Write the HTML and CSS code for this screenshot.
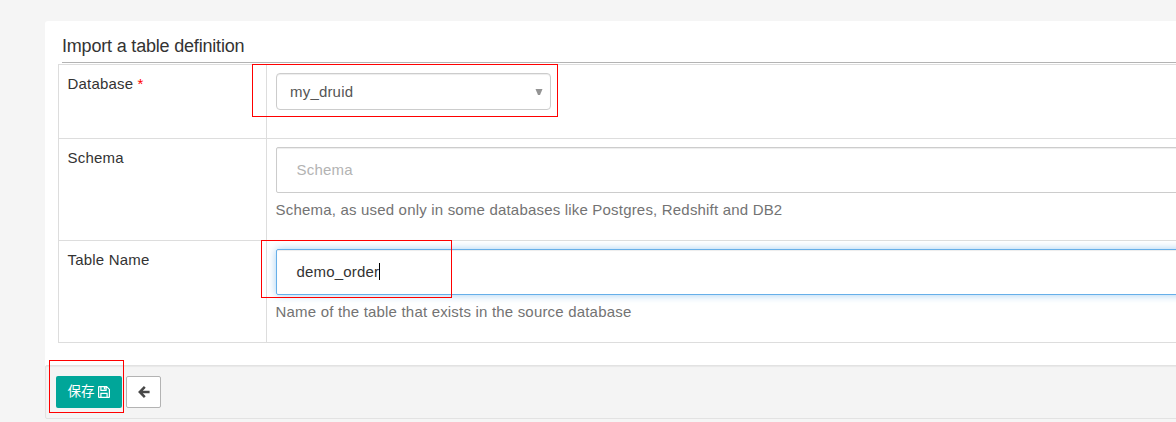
FILE: index.html
```html
<!DOCTYPE html>
<html lang="en">
<head>
<meta charset="utf-8">
<title>Import a table definition</title>
<link rel="stylesheet" href="styles.css">
</head>
<body>
<main class="panel">
  <h1 class="title">Import a table definition</h1>
  <div class="fields">
    <div class="row row-database">
      <div class="label">Database <span class="required">*</span></div>
      <div class="control">
        <div class="select"><span>my_druid</span><svg class="caret" width="8" height="6" viewBox="0 0 8 6"><path d="M.5 0h7L5 6H3z" fill="#949494"/></svg></div>
        <div class="mark mark-database"></div>
      </div>
    </div>
    <div class="row">
      <div class="label">Schema</div>
      <div class="control">
        <div class="input placeholder">Schema</div>
        <div class="help">Schema, as used only in some databases like Postgres, Redshift and DB2</div>
      </div>
    </div>
    <div class="row">
      <div class="label">Table Name</div>
      <div class="control">
        <div class="input focused">demo_order<span class="cursor"></span></div>
        <div class="help">Name of the table that exists in the source database</div>
        <div class="mark mark-table"></div>
      </div>
    </div>
  </div>
  <div class="actions">
    <button class="btn save"><span>保存</span><svg width="12" height="12" viewBox="0 0 12 12" fill="none" stroke="#fff" stroke-width="1.2"><path d="M.6 1.1Q.6.6 1.1.6H8.6L11.4 3.4V10.9Q11.4 11.4 10.9 11.4H1.1Q.6 11.4.6 10.9zM2.9.6V4.4H8.1V.6M2.9 11.4V7.4H9.1V11.4"/><path d="M6.6.8V3.4" stroke-width="1.6"/></svg></button>
    <button class="btn back"><svg width="12" height="12" viewBox="0 0 12 12" fill="none" stroke="#484848" stroke-width="2.5"><path d="M6.8.9L1.8 6L6.8 11.1M2 6H11.6"/></svg></button>
    <div class="mark mark-save"></div>
  </div>
</main>
</body>
</html>
```
FILE: styles.css
```css
* { box-sizing: border-box; }
body {
  margin: 0;
  height: 422px;
  overflow: hidden;
  background: #f5f5f5;
  padding: 21px 0 0 45px;
  font: 15px/21px "Liberation Sans", Arial, "Noto Sans CJK SC", sans-serif;
  letter-spacing: .19px;
  color: #333;
}
.panel { width: 1180px; background: #fff; border-radius: 3px; }
.title {
  margin: 0 0 0 17px;
  padding-top: 13px;
  height: 42px;
  border-bottom: 1px solid #b3b3b3;
  font-size: 18px;
  line-height: 24px;
  font-weight: normal;
  letter-spacing: -.19px;
}
.fields { margin: 1px 0 0 13px; border: 1px solid #ddd; border-right: 0; }
.row { display: flex; height: 102px; }
.row + .row { border-top: 1px solid #ddd; }
.row-database { height: 73px; }
.label { width: 208px; padding: 8px 8.5px; border-right: 1px solid #ddd; }
.required { color: #f00; }
.control { flex: 1; position: relative; padding: 8px 0 0 9px; }
.select {
  display: flex;
  align-items: center;
  justify-content: space-between;
  width: 275px;
  height: 37px;
  padding: 0 7px 0 13px;
  border: 1px solid #ccc;
  border-radius: 4px;
  box-shadow: inset 0 1px 1px rgba(0,0,0,.075);
  color: #555;
}
.input {
  display: flex;
  align-items: center;
  height: 46px;
  padding: 0 0 2px 19.5px;
  border: 1px solid #ccc;
  border-radius: 2px;
  box-shadow: inset 0 1px 1px rgba(0,0,0,.075);
}
.placeholder { color: #b3b3b3; }
.focused { border-color: #66afe9; box-shadow: inset 0 1px 1px rgba(0,0,0,.075), 0 0 8px rgba(102,175,233,.6); }
.cursor { width: 1px; height: 17px; margin-left: -.5px; background: #000; }
.help { margin: 6px 0 0 -.5px; color: #737373; }
.actions {
  position: relative;
  display: flex;
  gap: 4px;
  height: 54px;
  margin-top: 22px;
  padding: 10px 10px;
  background: #f4f4f4;
  border: 1px solid #e2e2e2;
  border-radius: 2px;
  box-shadow: inset 0 1px 1px rgba(0,0,0,.05);
}
.btn {
  display: flex;
  align-items: center;
  justify-content: center;
  height: 32px;
  padding: 0;
  border-radius: 2px;
  font: 13.5px/20px "Liberation Sans", "Noto Sans CJK SC", sans-serif;
}
.save { gap: 3px; width: 66px; padding-right: 1px; border: 0; background: #00a699; color: #fff; }
.back { width: 35px; border: 1px solid #b3b3b3; background: #fff; }
.mark { position: absolute; border: 1px solid #f00; }
.mark-database { left: -15px; top: -1px; width: 306px; height: 53px; }
.mark-table { left: -6px; top: -1px; width: 191px; height: 58px; }
.mark-save { left: 3px; top: -6px; width: 75px; height: 53px; }
```
